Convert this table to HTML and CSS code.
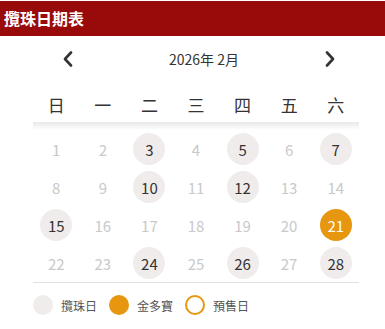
FILE: index.html
```html
<!DOCTYPE html>
<html lang="zh-Hant">
<head>
<meta charset="utf-8">
<link rel="stylesheet" href="styles.css">
</head>
<body>
<div class="header">攬珠日期表</div>
<div class="nav">
  <svg class="arrow" width="10" height="16" viewBox="0 0 10 16"><polyline points="8,1.5 2,8 8,14.5" fill="none" stroke="#333" stroke-width="2.6" stroke-linecap="round" stroke-linejoin="round"/></svg>
  <span class="month">2026年 2月</span>
  <svg class="arrow arrow-right" width="10" height="16" viewBox="0 0 10 16"><polyline points="2,1.5 8,8 2,14.5" fill="none" stroke="#333" stroke-width="2.6" stroke-linecap="round" stroke-linejoin="round"/></svg>
</div>
<div class="cal">
  <div class="weekdays">
    <span>日</span><span>一</span><span>二</span><span>三</span><span>四</span><span>五</span><span>六</span>
  </div>
  <div class="shade"></div>
  <div class="days">
    <div class="day"><span>1</span></div>
    <div class="day"><span>2</span></div>
    <div class="day"><span class="draw">3</span></div>
    <div class="day"><span>4</span></div>
    <div class="day"><span class="draw">5</span></div>
    <div class="day"><span>6</span></div>
    <div class="day"><span class="draw">7</span></div>
    <div class="day"><span>8</span></div>
    <div class="day"><span>9</span></div>
    <div class="day"><span class="draw">10</span></div>
    <div class="day"><span>11</span></div>
    <div class="day"><span class="draw">12</span></div>
    <div class="day"><span>13</span></div>
    <div class="day"><span>14</span></div>
    <div class="day"><span class="draw">15</span></div>
    <div class="day"><span>16</span></div>
    <div class="day"><span>17</span></div>
    <div class="day"><span>18</span></div>
    <div class="day"><span>19</span></div>
    <div class="day"><span>20</span></div>
    <div class="day"><span class="gold">21</span></div>
    <div class="day"><span>22</span></div>
    <div class="day"><span>23</span></div>
    <div class="day"><span class="draw">24</span></div>
    <div class="day"><span>25</span></div>
    <div class="day"><span class="draw">26</span></div>
    <div class="day"><span>27</span></div>
    <div class="day"><span class="draw">28</span></div>
  </div>
  <div class="legend">
    <span class="dot dot-draw"></span><span class="label">攬珠日</span>
    <span class="dot dot-gold"></span><span class="label">金多寶</span>
    <span class="dot dot-pre"></span><span class="label">預售日</span>
  </div>
</div>
</body>
</html>
```
FILE: styles.css
```css
html, body {
  margin: 0;
  padding: 0;
  background: #fff;
}
body {
  font-family: "Noto Sans CJK TC", "Noto Sans", sans-serif;
  color: #333;
  padding-top: 1px;
}
.header {
  height: 35px;
  line-height: 35px;
  background: #990b0b;
  color: #fff;
  font-size: 16px;
  font-weight: 700;
  padding-left: 4px;
}
.nav {
  height: 46px;
  display: flex;
  align-items: center;
  padding: 0 50px 0 63px;
}
.arrow {
  display: block;
  flex: none;
}
.month {
  margin-left: 96px;
  font-size: 14px;
  line-height: 20px;
  color: #333;
}
.arrow-right {
  margin-left: auto;
}
.cal {
  margin-left: 33px;
  width: 326px;
}
.weekdays {
  height: 40px;
  padding-top: 4px;
  box-sizing: border-box;
  display: grid;
  grid-template-columns: repeat(7, 1fr);
  align-items: center;
  font-size: 17px;
  color: #333;
  text-align: center;
}
.shade {
  height: 8px;
  background: linear-gradient(rgba(0,0,0,0.09), rgba(0,0,0,0));
}
.days {
  display: grid;
  grid-template-columns: repeat(7, 1fr);
  grid-auto-rows: 38px;
  border-bottom: 1px solid #e0e0e0;
}
.day {
  display: flex;
  align-items: center;
  justify-content: center;
}
.day span {
  width: 32px;
  height: 32px;
  border-radius: 50%;
  display: flex;
  align-items: center;
  justify-content: center;
  font-size: 15px;
  color: #c9c9c9;
}
.day span.draw {
  background: #f1ecec;
  color: #333;
}
.day span.gold {
  background: #e6960f;
  color: #fff;
}
.legend {
  height: 44px;
  display: flex;
  align-items: center;
}
.dot {
  width: 20px;
  height: 20px;
  border-radius: 50%;
  box-sizing: border-box;
  flex: none;
}
.dot-draw { background: #f1ecec; }
.dot-gold { background: #e6960f; }
.dot-pre { border: 2px solid #e6960f; }
.label {
  font-size: 12px;
  color: #555;
  margin-left: 8px;
  margin-right: 12px;
}
```
